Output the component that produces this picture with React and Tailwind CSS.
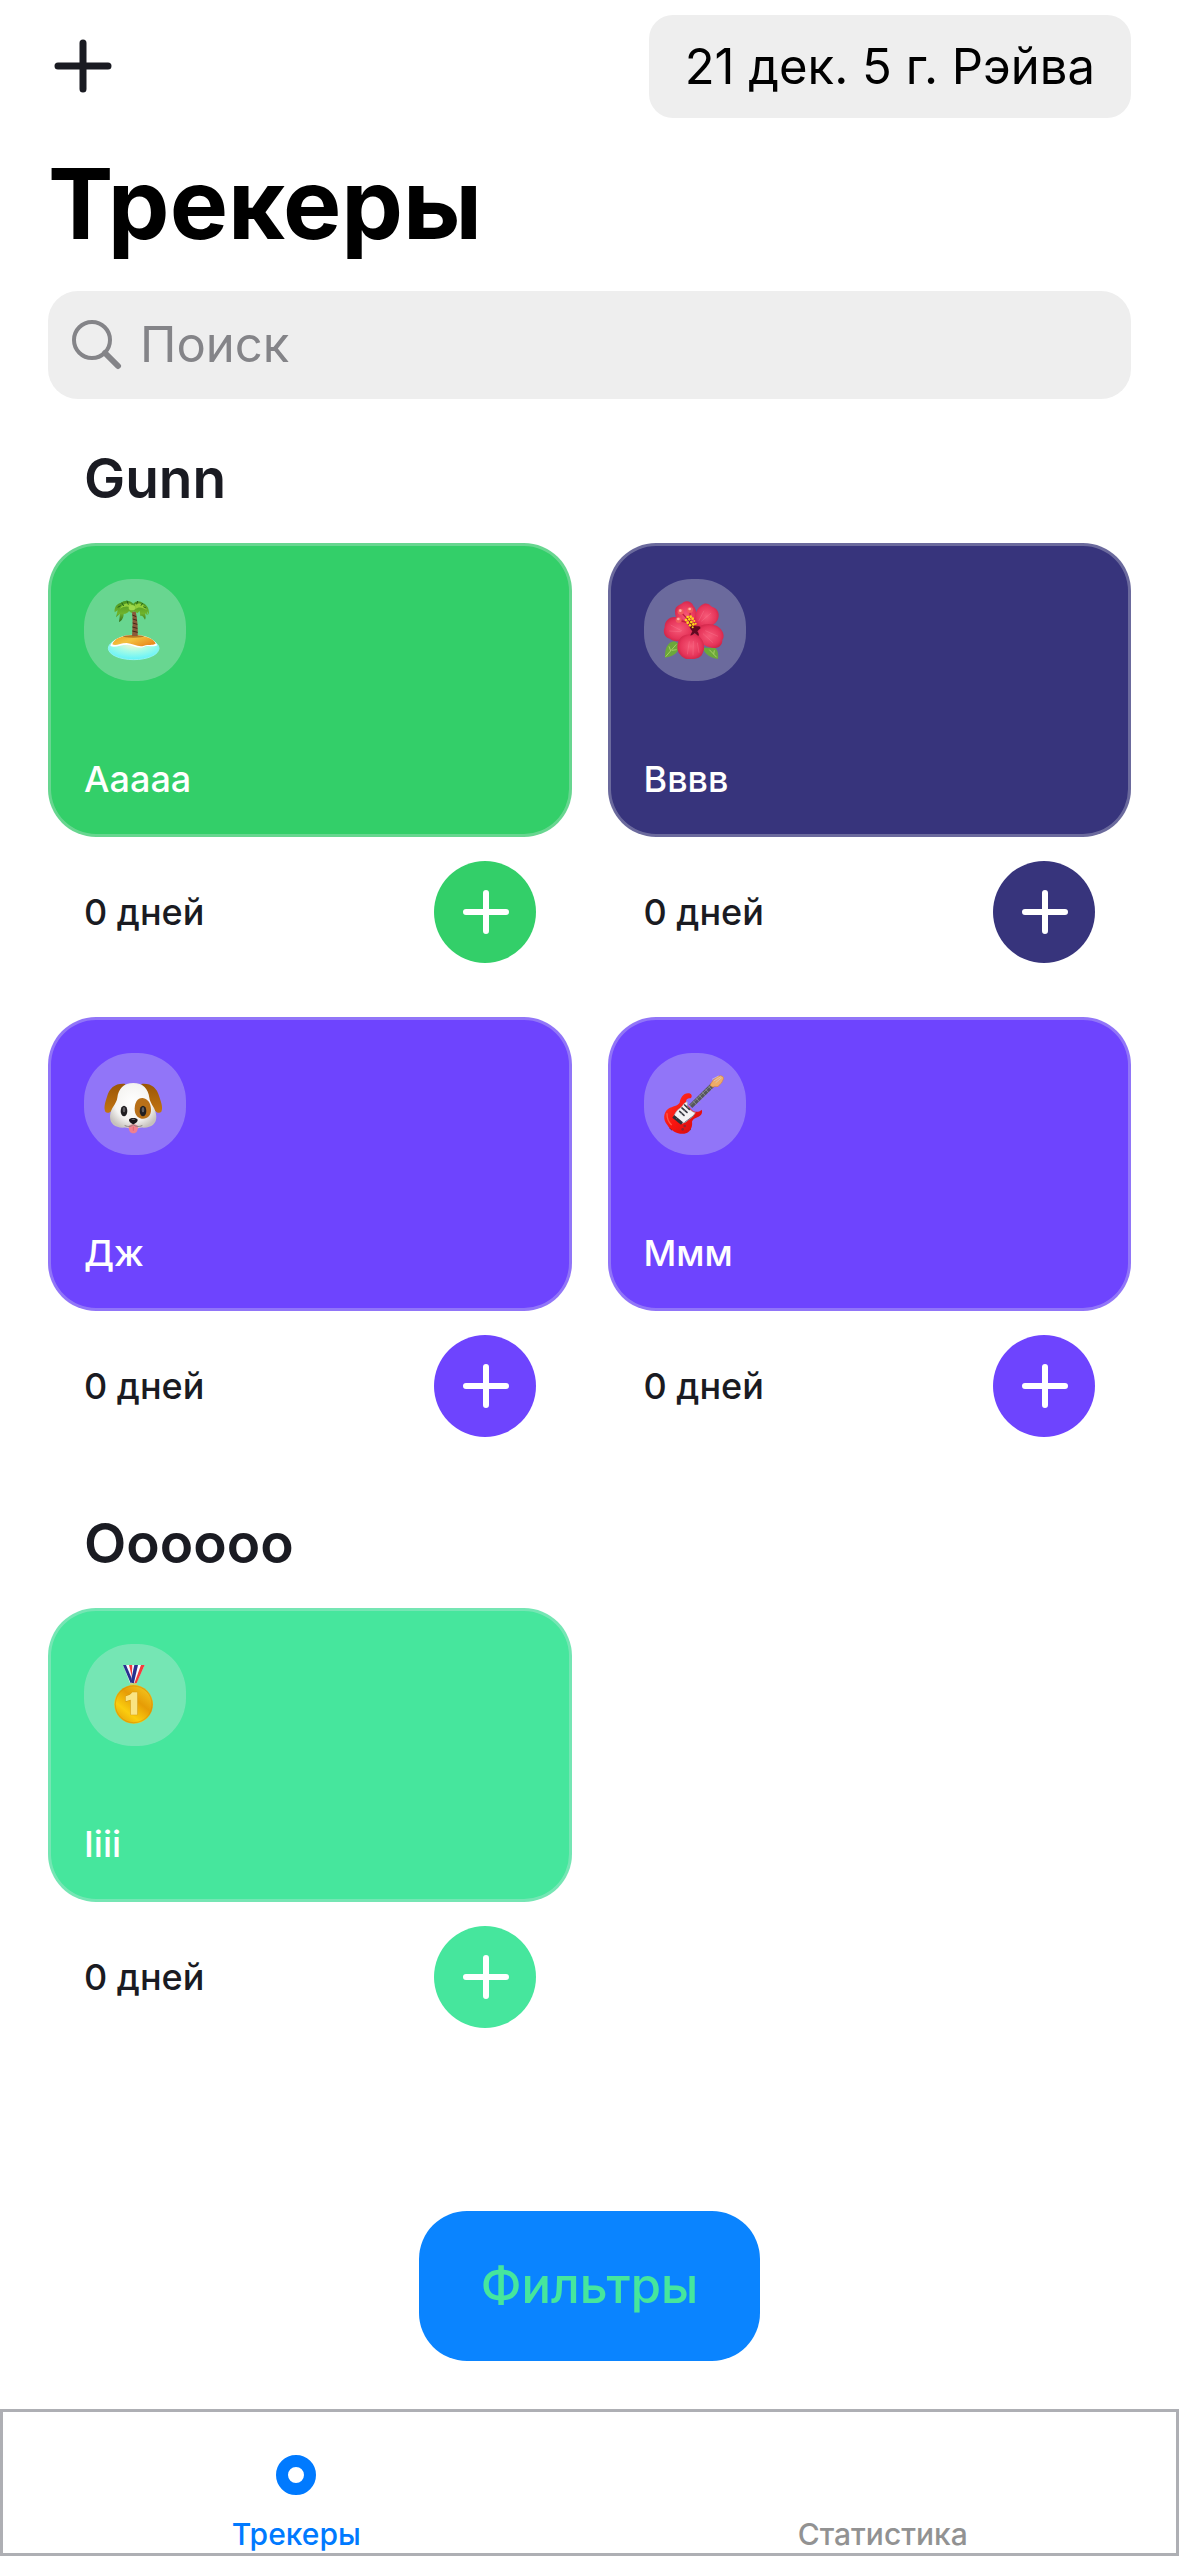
import React from "react";

function PalmIsland() {
  return (
    <svg viewBox="42 42 306 306" className="size-full" aria-hidden="true">
      <defs>
        <radialGradient id="palm-sea" cx="0.5" cy="0.3" r="0.7">
          <stop offset="0" stopColor="#fff6cf" />
          <stop offset="0.5" stopColor="#a4fbe6" />
          <stop offset="1" stopColor="#62f2fb" />
        </radialGradient>
        <linearGradient id="palm-sand" x1="0" y1="0" x2="1" y2="0.6">
          <stop offset="0" stopColor="#ee9d24" />
          <stop offset="0.5" stopColor="#f3c13f" />
          <stop offset="1" stopColor="#ea8c1f" />
        </linearGradient>
        <linearGradient id="palm-leaf" x1="0" y1="0" x2="0" y2="1">
          <stop offset="0" stopColor="#4a9422" />
          <stop offset="0.6" stopColor="#6fb32c" />
          <stop offset="1" stopColor="#2f6f1c" />
        </linearGradient>
      </defs>
      <ellipse cx="191" cy="250" rx="76" ry="34" fill="url(#palm-sea)" />
      <ellipse cx="191" cy="250" rx="76" ry="34" fill="none" stroke="#8ff3f4" strokeWidth="3" />
      <path d="M121 243C124 226 150 210 191 209C232 210 256 224 262 241C250 248 236 240 222 245C204 253 190 240 172 239C150 239 136 250 121 243Z" fill="#fff" />
      <path d="M127 238C131 222 156 211 191 210C228 211 253 222 257 236C247 242 236 237 222 242C206 249 190 235 170 234C150 234 138 244 127 238Z" fill="url(#palm-sand)" />
      <ellipse cx="190" cy="214" rx="32" ry="4" fill="#8d4d12" opacity="0.6" />
      <path d="M186 213C188 190 189 165 186 140L197 139C203 165 204 192 203 213Z" fill="#8a5a3a" />
      <path d="M187 150l12 5M188 162l13 4M188 174l14 4M187 186l15 4M187 198l16 4" stroke="#452716" strokeWidth="3" />
      <path d="M190 116C180 104 162 105 153 113C140 116 132 127 134 142L143 136L138 157L150 146L147 171C156 168 161 157 161 147C169 147 174 143 177 138L184 144L192 138L202 145L209 138L211 153C216 150 220 155 225 164C229 158 226 151 225 145L233 151L231 139L237 149C238 134 233 121 220 115C209 106 198 107 190 116Z" fill="url(#palm-leaf)" />
      <path d="M184 117C170 111 158 117 149 132C164 123 177 122 184 132ZM195 118C210 111 224 119 230 135C216 126 205 124 196 133Z" fill="#93cf3c" />
      <ellipse cx="186" cy="128" rx="10" ry="8" fill="#9ed94c" />
      <path d="M155 113l6 10M171 107l4 12M203 108l-3 10M218 114l-5 8M143 127l9-5M228 129l-8-4" stroke="#23641a" strokeWidth="3" />
    </svg>
  );
}

function Hibiscus() {
  return (
    <svg viewBox="42 42 306 306" className="size-full" aria-hidden="true">
      <defs>
        <radialGradient id="petal" cx="0.5" cy="0.5" r="0.65">
          <stop offset="0" stopColor="#f75a78" />
          <stop offset="0.6" stopColor="#e6355a" />
          <stop offset="1" stopColor="#bd183a" />
        </radialGradient>
      </defs>
      <path d="M105 278C104 252 112 231 133 229L150 238C149 260 131 276 105 278Z" fill="#6ba83a" />
      <path d="M107 275L139 238M122 258l-5-14M126 256l14-2" stroke="#a7cf63" strokeWidth="3" fill="none" />
      <path d="M264 282C266 266 263 253 254 248L218 248C225 268 241 279 264 282Z" fill="#6ba83a" />
      <path d="M260 277L238 254M251 268l2-12" stroke="#a7cf63" strokeWidth="3" fill="none" />
      <path d="M186 194C155 187 134 165 135 139C136 120 152 121 160 112C171 105 185 110 190 122C203 136 203 165 198 192Z" fill="url(#petal)" />
      <path d="M193 192C189 158 198 126 222 116C238 112 240 125 253 128C270 137 268 158 261 168C250 186 222 192 193 192Z" fill="url(#petal)" />
      <path d="M192 204C176 230 139 236 119 221C103 218 98 201 104 187C103 169 118 155 134 156C161 158 182 178 192 204Z" fill="url(#petal)" />
      <path d="M196 202C202 176 239 171 261 183C279 193 286 214 277 225C278 242 263 251 249 249C220 247 201 225 196 202Z" fill="url(#petal)" />
      <path d="M194 205C217 215 229 242 219 262C214 281 194 283 180 282C164 284 155 275 146 263C138 246 143 220 160 212C172 207 181 210 194 205Z" fill="url(#petal)" />
      <path d="M174 176C184 182 194 184 208 184L212 189L202 199C207 205 208 212 205 213L194 204C189 210 182 213 181 211L187 199C180 191 178 184 174 176Z" fill="#620920" />
      <path d="M122 180l34 18M118 198l35 2M222 137l-16 31M243 144l-29 25M226 197l38 17M219 206l30 27M178 229l-6 39M190 228l-1 43M202 233l5 30" stroke="#ff91a4" strokeWidth="2" opacity="0.4" />
      <path d="M189 180L151 139M181 172L180 133M178 175L146 165" stroke="#c31f3d" strokeWidth="4" />
      <g fill="#f25b5c">
        <circle cx="152" cy="140" r="9" /><circle cx="180" cy="135" r="9" /><circle cx="146" cy="165" r="9" />
      </g>
      <g fill="#ffb0a8">
        <circle cx="151" cy="137" r="4" /><circle cx="179" cy="132" r="4" /><circle cx="145" cy="162" r="4" />
      </g>
      <path d="M174 158L189 182" stroke="#8a2f1c" strokeWidth="8" />
      <g fill="#ffd51a">
        <circle cx="173" cy="156" r="4" /><circle cx="182" cy="155" r="4" /><circle cx="168" cy="165" r="4" />
        <circle cx="178" cy="163" r="4" /><circle cx="188" cy="161" r="4" /><circle cx="173" cy="173" r="4" />
        <circle cx="184" cy="171" r="4" /><circle cx="193" cy="168" r="3" /><circle cx="180" cy="181" r="4" />
        <circle cx="190" cy="178" r="4" /><circle cx="197" cy="176" r="3" /><circle cx="188" cy="187" r="3" />
      </g>
    </svg>
  );
}

function DogFace() {
  return (
    <svg viewBox="42 39 306 306" className="size-full" aria-hidden="true">
      <defs>
        <radialGradient id="dog-fur" cx="0.5" cy="0.42" r="0.6">
          <stop offset="0" stopColor="#ffffff" />
          <stop offset="0.65" stopColor="#f5f4f2" />
          <stop offset="1" stopColor="#c6c1bd" />
        </radialGradient>
        <linearGradient id="dog-ear" x1="0" y1="0" x2="0" y2="1">
          <stop offset="0" stopColor="#9a5607" />
          <stop offset="1" stopColor="#c27410" />
        </linearGradient>
      </defs>
      <path d="M166 132C137 129 119 143 111 170C104 190 101 204 106 215C112 222 121 217 128 209L160 165Z" fill="url(#dog-ear)" />
      <path d="M214 132C243 129 260 143 268 170C275 190 279 204 274 215C268 222 259 217 252 209L220 165Z" fill="url(#dog-ear)" />
      <path d="M190 129C161 129 145 147 142 173C140 192 121 203 120 229C119 252 137 264 160 263C172 262 179 267 190 267C201 267 208 262 220 263C243 264 260 252 259 229C258 203 240 192 238 173C235 147 219 129 190 129Z" fill="url(#dog-fur)" />
      <path d="M218 174C203 173 194 187 194 207C194 223 202 234 215 236C232 238 243 226 243 210C243 191 234 176 218 174Z" fill="#b87019" />
      <ellipse cx="162" cy="213" rx="10" ry="16" fill="#211f22" />
      <ellipse cx="219" cy="213" rx="10" ry="16" fill="#211f22" />
      <ellipse cx="162" cy="209" rx="4" ry="8" fill="#5f5d60" />
      <ellipse cx="219" cy="209" rx="4" ry="8" fill="#5f5d60" />
      <path d="M176 258C176 272 180 280 190 280C200 280 204 272 204 258C196 251 184 251 176 258Z" fill="#f0808f" />
      <path d="M190 260v12" stroke="#d35b6f" strokeWidth="2" />
      <path d="M190 246v9M165 257C176 262 186 259 190 253C194 259 205 262 216 257" fill="none" stroke="#8b8280" strokeWidth="3" strokeLinecap="round" />
      <path d="M177 240C178 232 202 232 203 240C203 247 194 252 190 252C186 252 177 247 177 240Z" fill="#171518" />
      <ellipse cx="190" cy="238" rx="6" ry="2" fill="#68646a" />
    </svg>
  );
}

function Guitar() {
  return (
    <svg viewBox="42 39 306 306" className="size-full" aria-hidden="true">
      <defs>
        <linearGradient id="guitar-body" x1="0" y1="0" x2="1" y2="1">
          <stop offset="0" stopColor="#ff3b2e" />
          <stop offset="0.5" stopColor="#f9140f" />
          <stop offset="1" stopColor="#c90d13" />
        </linearGradient>
      </defs>
      <path d="M119 262l8 8M181 262l-2 8" stroke="#4c2633" strokeWidth="5" />
      <path d="M178 160C161 157 151 173 149 188C143 198 128 198 115 206C99 217 99 240 112 255C124 274 148 286 168 280C184 274 188 255 186 245C190 234 200 234 209 228C216 223 218 214 215 209C208 216 199 217 191 214C184 210 179 202 171 194C165 185 169 172 181 175C187 173 187 163 178 160Z" fill="url(#guitar-body)" />
      <path d="M172 185C161 187 159 198 150 205C142 208 136 219 132 227L157 250C170 247 176 237 187 231L196 218C185 216 178 207 172 199Z" fill="#f4f3f4" stroke="#a9a6ad" strokeWidth="2" />
      <path d="M133 225L159 247L153 254L127 233Z" fill="#313138" />
      <path d="M149 214L162 226M156 204L171 217M164 195L178 208" stroke="#3a3a42" strokeWidth="5" strokeLinecap="round" />
      <path d="M182 199L248 135" stroke="#55575b" strokeWidth="14" />
      <path d="M190 184l12 13M199 175l12 13M208 166l12 13M217 157l12 13M227 148l11 12M236 139l11 12" stroke="#9da1a7" strokeWidth="2" />
      <path d="M139 236L253 126" stroke="#d5d7dc" strokeWidth="1" />
      <path d="M242 132C248 124 249 119 256 115C263 109 271 105 277 109C284 114 279 119 277 124C275 132 268 132 265 139C259 142 254 136 249 142L240 136Z" fill="#efac67" stroke="#d88543" strokeWidth="2" />
      <path d="M246 118l20-10M251 123l22-13M257 128l18-15" stroke="#d6cfd0" strokeWidth="2" />
      <path d="M164 247L192 226" stroke="#777783" strokeWidth="3" />
      <circle cx="164" cy="258" r="4" fill="#8f2430" /><circle cx="158" cy="268" r="4" fill="#8f2430" />
      <path d="M111 221C111 232 115 245 124 254" fill="none" stroke="#ff5a48" strokeWidth="4" strokeLinecap="round" />
    </svg>
  );
}

function Medal() {
  return (
    <svg viewBox="42 42 306 306" className="size-full" aria-hidden="true">
      <defs>
        <linearGradient id="medal-gold" x1="0.1" y1="1" x2="0.9" y2="0">
          <stop offset="0" stopColor="#e39b08" />
          <stop offset="0.3" stopColor="#fbcd0e" />
          <stop offset="0.6" stopColor="#e69c06" />
          <stop offset="0.85" stopColor="#f0bb18" />
          <stop offset="1" stopColor="#d48d04" />
        </linearGradient>
      </defs>
      <path d="M159 105H197L192 162H181Z" fill="#f8f8fc" />
      <path d="M159 105H168L190 157L183 162Z" fill="#27308f" />
      <path d="M177 105H187L195 140L190 158Z" fill="#f23b3d" />
      <path d="M187 105H224L199 160L184 164Z" fill="#fafaff" />
      <path d="M193 105H204L191 162L182 156Z" fill="#27308f" />
      <path d="M213 105H224L200 159L192 163Z" fill="#f23b3d" />
      <rect x="180" y="160" width="21" height="8" rx="4" fill="#c5d96a" />
      <circle cx="191" cy="223" r="58" fill="url(#medal-gold)" />
      <circle cx="191" cy="223" r="55" fill="none" stroke="#d08a06" strokeWidth="3" opacity="0.5" />
      <path d="M187 187H202V254H182V209L167 214V199C177 197 183 192 187 187Z" fill="#fae483" stroke="#d0920b" strokeWidth="3" strokeLinejoin="round" paintOrder="stroke" />
    </svg>
  );
}

const sections = [
  {
    title: "Gunn",
    trackers: [
      { name: "Ааааа", color: "bg-[#33cf69]", Emoji: PalmIsland },
      { name: "Вввв", color: "bg-[#37347c]", Emoji: Hibiscus },
      { name: "Дж", color: "bg-[#6e44fe]", Emoji: DogFace },
      { name: "Ммм", color: "bg-[#6e44fe]", Emoji: Guitar },
    ],
  },
  {
    title: "Oooooo",
    trackers: [{ name: "Iiii", color: "bg-[#46e69d]", Emoji: Medal }],
  },
];

function Tracker({ name, color, Emoji }) {
  return (
    <article>
      <div className={`flex h-[294px] flex-col justify-between rounded-[48px] border-3 border-[#e6e8eb]/30 p-[33px] ${color}`}>
        <div className="size-[102px] rounded-[48px] bg-[#e6e8eb]/30">
          <Emoji />
        </div>
        <h3 className="text-[36px] leading-[44px] font-medium text-white">{name}</h3>
      </div>
      <div className="flex items-center justify-between px-9 pt-6">
        <span className="text-[36px] leading-[44px] font-medium">0 дней</span>
        <button type="button" aria-label={`Отметить ${name}`} className={`size-[102px] rounded-full ${color}`}>
          <svg viewBox="0 0 102 102" className="size-full" aria-hidden="true">
            <path d="M32 51H72M52 32V70" stroke="#fff" strokeWidth="6" strokeLinecap="round" />
          </svg>
        </button>
      </div>
    </article>
  );
}

export default function App() {
  return (
    <div className="flex min-h-screen flex-col bg-white font-[Inter,sans-serif] text-[#1a1b22]">
      <header className="px-12 pt-[15px]">
        <div className="flex items-center justify-between">
          <button type="button" aria-label="Добавить трекер" className="size-[70px]">
            <svg viewBox="0 0 70 70" className="size-full" aria-hidden="true">
              <path d="M10 34H60M35 11V57" stroke="#1a1b22" strokeWidth="7" strokeLinecap="round" />
            </svg>
          </button>
          <button type="button" className="h-[103px] rounded-[24px] bg-[#eeeeee] px-9 text-[49px] leading-[60px] text-black">
            21 дек. 5 г. Рэйва
          </button>
        </div>
        <h1 className="mt-[26px] text-[98px] leading-[120px] font-bold text-black">Трекеры</h1>
        <label className="mt-[27px] flex h-[108px] items-center gap-[18px] rounded-[30px] bg-[#eeeeee] px-6">
          <svg viewBox="0 0 50 50" className="size-[50px] shrink-0" fill="none" stroke="#848488" aria-hidden="true">
            <circle cx="20" cy="20" r="18" strokeWidth="4" />
            <path d="M33 33L46 46" strokeWidth="6" strokeLinecap="round" />
          </svg>
          <input
            type="search"
            aria-label="Поиск"
            placeholder="Поиск"
            className="min-w-0 flex-1 bg-transparent text-[49px] leading-[60px] outline-none placeholder:text-[#848488]"
          />
        </label>
      </header>

      <main className="flex flex-1 flex-col px-12 pt-[46px]">
        <div className="flex flex-col gap-[73px]">
          {sections.map((section) => (
            <section key={section.title}>
              <h2 className="mb-8 px-9 text-[55px] leading-[66px] font-semibold">{section.title}</h2>
              <div className="grid grid-cols-2 gap-x-9 gap-y-[54px]">
                {section.trackers.map((tracker) => (
                  <Tracker key={tracker.name} {...tracker} />
                ))}
              </div>
            </section>
          ))}
        </div>
        <button type="button" className="mt-auto mb-12 h-[150px] self-center rounded-[48px] bg-[#0a84ff] px-[62px] text-[49px] leading-[60px] font-medium text-[#46e69d]">
          Фильтры
        </button>
      </main>

      <nav className="grid h-[147px] grid-cols-2 border-3 border-[#aeafb4] text-[30px] leading-[38px] font-medium">
        <a href="#trackers" aria-current="page" className="flex flex-col items-center justify-end gap-5 text-[#007aff]">
          <svg viewBox="0 0 40 40" className="size-10" aria-hidden="true">
            <circle cx="20" cy="20" r="14" fill="none" stroke="currentColor" strokeWidth="12" />
          </svg>
          Трекеры
        </a>
        <a href="#statistics" className="flex flex-col items-center justify-end text-[#929292]">
          Статистика
        </a>
      </nav>
    </div>
  );
}
